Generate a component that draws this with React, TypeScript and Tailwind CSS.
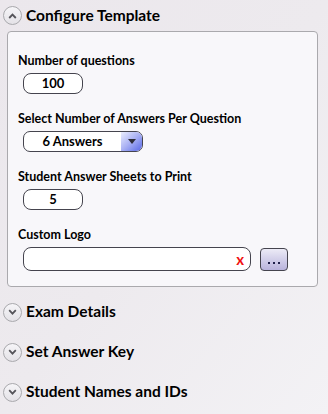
import { useState } from "react";

function Chevron({ up }: { up?: boolean }) {
  return (
    <span className="flex h-[19px] w-[19px] shrink-0 items-center justify-center rounded-full border border-[#a9a9ad] bg-gradient-to-b from-[#f6f5f8] to-[#e4e2e7]">
      <svg width="9" height="6" viewBox="0 0 9 6">
        <path
          d={up ? "M1.2 5 L4.5 1.6 L7.8 5" : "M1.2 1.2 L4.5 4.6 L7.8 1.2"}
          fill="none"
          stroke="#55545a"
          strokeWidth="1.8"
        />
      </svg>
    </span>
  );
}

function Section({ title }: { title: string }) {
  return (
    <div className="flex h-[40px] items-center gap-[4px] pl-[3px]">
      <Chevron />
      <span className="text-[15.5px] font-bold text-black">{title}</span>
    </div>
  );
}

function Field({ label, children }: { label: string; children: React.ReactNode }) {
  return (
    <div className="flex flex-col">
      <div className="h-[16px] text-[12.5px] leading-[16px] font-bold text-black">{label}</div>
      <div className="mt-[4px] pl-[5px]">{children}</div>
    </div>
  );
}

function NumberBox({ value }: { value: string }) {
  return (
    <div className="flex h-[21px] w-[60px] items-center justify-center rounded-[8px] border border-[#45444e] bg-white text-[13px] font-bold text-black">
      {value}
    </div>
  );
}

export default function App() {
  const [answers] = useState("6 Answers");

  return (
    <main
      className="h-[414px] w-[328px] overflow-hidden bg-gradient-to-br from-[#ebe7ec] via-[#edeaee] to-[#f3f2f5]"
      style={{ fontFamily: 'Lato, "Liberation Sans", Arial, sans-serif' }}
    >
      <div className="flex h-[31px] items-start gap-[4px] pt-[6px] pl-[3px]">
        <Chevron up />
        <span className="text-[15.5px] leading-[19px] font-bold text-black">Configure Template</span>
      </div>

      <div className="ml-[7px] flex w-[311px] flex-col gap-[17px] rounded-[4px] border border-[#aaa9ad] bg-[#f8f7fa] pt-[21px] pb-[15px] pl-[10px]">
        <Field label="Number of questions">
          <NumberBox value="100" />
        </Field>

        <Field label="Select Number of Answers Per Question">
          <div className="flex h-[21px] w-[120px] overflow-hidden rounded-[7px] border border-[#45444e] bg-white">
            <div className="flex flex-1 items-center justify-center text-[13px] font-bold text-black">
              {answers}
            </div>
            <div className="flex w-[21px] items-center justify-center bg-gradient-to-br from-[#eceefd] via-[#a9b0f3] to-[#5b66e6]">
              <svg width="8" height="5" viewBox="0 0 8 5">
                <path d="M0 0 H8 L4 5 Z" fill="#2d2d3a" />
              </svg>
            </div>
          </div>
        </Field>

        <Field label="Student Answer Sheets to Print">
          <NumberBox value="5" />
        </Field>

        <Field label="Custom Logo">
          <div className="flex items-center gap-[9px]">
            <div className="flex h-[24px] w-[228px] items-center justify-end rounded-[8px] border border-[#45444e] bg-white pr-[6px]">
              <span className="text-[15px] leading-none font-bold text-[#f01010]">x</span>
            </div>
            <button className="flex h-[23px] w-[28px] items-end justify-center rounded-[4px] border border-[#45444e] bg-gradient-to-b from-[#ecebf6] to-[#b9b3dc] pb-[6px]">
              <span className="flex gap-[3px]">
                <span className="h-[2px] w-[2px] bg-[#20204a]" />
                <span className="h-[2px] w-[2px] bg-[#20204a]" />
                <span className="h-[2px] w-[2px] bg-[#20204a]" />
              </span>
            </button>
          </div>
        </Field>
      </div>

      <div className="mt-[5px] flex flex-col">
        <Section title="Exam Details" />
        <Section title="Set Answer Key" />
        <Section title="Student Names and IDs" />
      </div>
    </main>
  );
}
